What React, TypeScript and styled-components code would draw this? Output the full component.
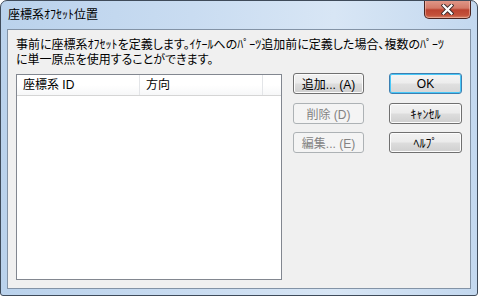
import React from 'react';
import styled, { createGlobalStyle, css } from 'styled-components';

const FONT = `"Liberation Sans", "Noto Sans CJK JP", sans-serif`;

const GlobalStyle = createGlobalStyle`
  html, body {
    margin: 0;
    padding: 0;
    background: #ffffff;
  }
  body {
    font-family: ${FONT};
    font-size: 12px;
    color: #000000;
  }
`;

const buttons = [
  { label: '追加... (A)', disabled: false },
  { label: '削除 (D)', disabled: true },
  { label: '編集... (E)', disabled: true },
];

const actions = [
  { label: 'OK', primary: true },
  { label: 'ｷｬﾝｾﾙ', primary: false },
  { label: 'ﾍﾙﾌﾟ', primary: false },
];

const CloseGlyph = () => (
  <svg width="13" height="11" viewBox="0 0 13 11">
    <path d="M2.5 1.5 L10.5 9.5 M10.5 1.5 L2.5 9.5" stroke="#3b2a2a" strokeWidth="4" strokeLinecap="square" />
    <path d="M2.5 1.5 L10.5 9.5 M10.5 1.5 L2.5 9.5" stroke="#ffffff" strokeWidth="2.2" strokeLinecap="square" />
  </svg>
);

const App = () => {
  return (
    <>
      <GlobalStyle />
      <Window>
        <TitleBar>
          <Title>座標系ｵﾌｾｯﾄ位置</Title>
          <CloseButton>
            <CloseGlyph />
          </CloseButton>
        </TitleBar>
        <Client>
          <Description>
            事前に座標系ｵﾌｾｯﾄを定義します。ｲｹｰﾙへのﾊﾟｰﾂ追加前に定義した場合、複数のﾊﾟｰﾂ
            <br />
            に単一原点を使用することができます。
          </Description>
          <Body>
            <ListBox>
              <ListHeader>
                <HeaderCell $width={123}>座標系 ID</HeaderCell>
                <HeaderCell $width={123}>方向</HeaderCell>
                <HeaderCell $width={0} />
              </ListHeader>
            </ListBox>
            <ButtonColumn $width={71}>
              {buttons.map((b) => (
                <PushButton key={b.label} disabled={b.disabled}>
                  {b.label}
                </PushButton>
              ))}
            </ButtonColumn>
            <ButtonColumn $width={73}>
              {actions.map((b) => (
                <PushButton key={b.label} $primary={b.primary}>
                  {b.label}
                </PushButton>
              ))}
            </ButtonColumn>
          </Body>
        </Client>
      </Window>
    </>
  );
};

const Window = styled.div`
  box-sizing: border-box;
  width: 478px;
  height: 296px;
  display: flex;
  flex-direction: column;
  padding: 0 6px 6px 6px;
  border: 1px solid #3f4b5a;
  border-radius: 7px 7px 3px 3px;
  background: linear-gradient(90deg, #bad2ec 0%, #c9dcf1 40%, #d8e6f5 70%, #c3d8ef 100%);
  overflow: hidden;
`;

const TitleBar = styled.div`
  display: flex;
  align-items: flex-start;
  height: 28px;
  flex-shrink: 0;
`;

const Title = styled.div`
  padding: 7px 0 0 1px;
  font-size: 12px;
  line-height: 15px;
  color: #000000;
  flex: 1;
`;

const CloseButton = styled.div`
  box-sizing: border-box;
  width: 47px;
  height: 19px;
  margin-top: -1px;
  display: flex;
  align-items: center;
  justify-content: center;
  border: 1px solid #4a2420;
  border-top: none;
  border-radius: 0 0 5px 5px;
  background: linear-gradient(180deg, #e19a8b 0%, #d47a68 45%, #bb4330 55%, #c4523b 85%, #d6866b 100%);
  box-shadow: inset 0 0 0 1px rgba(255, 210, 200, 0.45);
`;

const Client = styled.div`
  flex: 1;
  display: flex;
  flex-direction: column;
  padding: 8px;
  background: #f0f0f0;
  border: 1px solid #8393a6;
`;

const Description = styled.div`
  font-size: 12px;
  line-height: 15px;
  white-space: nowrap;
  font-feature-settings: 'palt';
  color: #000000;
`;

const Body = styled.div`
  flex: 1;
  display: flex;
  align-items: flex-start;
  margin-top: 5px;
`;

const ListBox = styled.div`
  box-sizing: border-box;
  width: 266px;
  height: 206px;
  margin-top: 1px;
  border: 1px solid #828790;
  background: #ffffff;
`;

const ListHeader = styled.div`
  display: flex;
  height: 20px;
  background: linear-gradient(180deg, #ffffff 0%, #ffffff 50%, #f6f7f8 100%);
  border-bottom: 1px solid #d5d5d5;
`;

const HeaderCell = styled.div<{ $width: number }>`
  box-sizing: border-box;
  width: ${(p) => p.$width}px;
  flex: ${(p) => (p.$width ? 'none' : 1)};
  padding: 3px 0 0 6px;
  border-right: ${(p) => (p.$width ? '1px solid #e3e5e8' : 'none')};
  font-size: 12px;
  line-height: 15px;
  color: #000000;
`;

const ButtonColumn = styled.div<{ $width: number }>`
  display: flex;
  flex-direction: column;
  gap: 8.5px;
  width: ${(p) => p.$width}px;
  margin-left: ${(p) => (p.$width === 71 ? 11 : 25)}px;
`;

const PushButton = styled.button<{ $primary?: boolean }>`
  box-sizing: border-box;
  height: 21px;
  padding: 0;
  font-family: ${FONT};
  font-size: 12px;
  color: #000000;
  border: 1px solid #707070;
  border-radius: 3px;
  background: linear-gradient(180deg, #f2f2f2 0%, #ebebeb 48%, #dddddd 52%, #cfcfcf 100%);
  box-shadow: inset 0 0 0 1px #fcfcfc;

  ${(p) =>
    p.$primary &&
    css`
      border-color: #3c7fb1;
      box-shadow: inset 0 0 0 1px #48c8f8;
      background: linear-gradient(180deg, #f4f4f4 0%, #ededed 48%, #e0e0e0 52%, #d6d6d6 100%);
    `}

  &:disabled {
    color: #838383;
    border-color: #adb2b5;
    background: #f4f4f4;
    box-shadow: none;
  }
`;

export default App;
